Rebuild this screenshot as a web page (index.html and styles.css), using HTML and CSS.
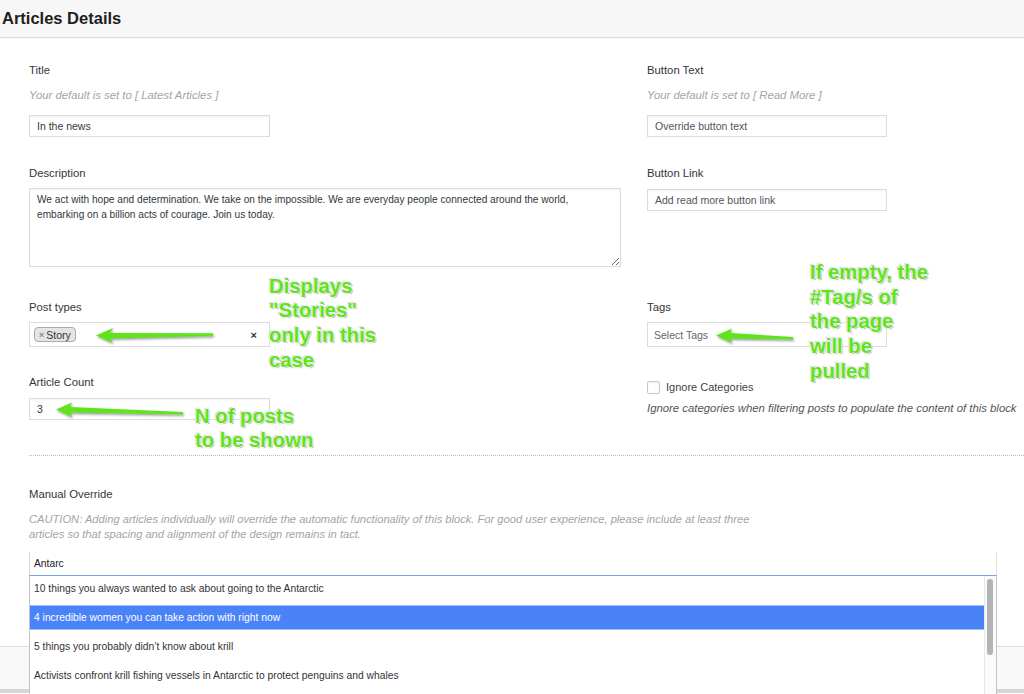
FILE: index.html
```html
<!DOCTYPE html>
<html>
<head>
<meta charset="utf-8">
<title>Articles Details</title>
<link rel="stylesheet" href="styles.css">
</head>
<body>
<div class="page">
  <header class="panel-head"><h1 class="panel-title">Articles Details</h1></header>
  <main class="panel-body">
    <div class="cols">
      <div class="col">
        <div class="field">
          <div class="lbl">Title</div>
          <p class="hint">Your default is set to [ Latest Articles ]</p>
          <div class="txt">In the news</div>
        </div>
        <div class="field f-desc">
          <div class="lbl">Description</div>
          <textarea class="area">We act with hope and determination. We take on the impossible. We are everyday people connected around the world, embarking on a billion acts of courage. Join us today.</textarea>
        </div>
        <div class="field f-post">
          <div class="lbl">Post types</div>
          <div class="sel">
            <span class="chip"><span class="chip-x">×</span>Story</span>
            <span class="sel-clear">×</span>
          </div>
        </div>
        <div class="field f-count">
          <div class="lbl">Article Count</div>
          <div class="txt txt-count">3</div>
        </div>
      </div>
      <div class="col">
        <div class="field">
          <div class="lbl">Button Text</div>
          <p class="hint">Your default is set to [ Read More ]</p>
          <div class="txt txt-ph">Override button text</div>
        </div>
        <div class="field f-link">
          <div class="lbl">Button Link</div>
          <div class="txt txt-ph txt-link">Add read more button link</div>
        </div>
        <div class="field f-tags">
          <div class="lbl">Tags</div>
          <div class="sel sel-tags"><span class="sel-ph">Select Tags</span></div>
        </div>
        <div class="check-row">
          <span class="checkbox"></span>
          <span class="check-lbl">Ignore Categories</span>
        </div>
        <p class="help">Ignore categories when filtering posts to populate the content of this block</p>
      </div>
    </div>
    <div class="sep"></div>
    <section class="manual">
      <div class="lbl">Manual Override</div>
      <p class="caution">CAUTION: Adding articles individually will override the automatic functionality of this block. For good user experience, please include at least three articles so that spacing and alignment of the design remains in tact.</p>
      <div class="search">
        <span class="search-text">Antarc</span>
        <div class="dropdown">
          <ul class="results">
            <li class="opt">10 things you always wanted to ask about going to the Antarctic</li>
            <li class="opt opt-active">4 incredible women you can take action with right now</li>
            <li class="opt">5 things you probably didn’t know about krill</li>
            <li class="opt">Activists confront krill fishing vessels in Antarctic to protect penguins and whales</li>
          </ul>
          <div class="scrollbar"><span class="thumb"></span></div>
        </div>
      </div>
    </section>
  </main>
  <footer class="panel-foot"></footer>
  <div class="bottom-bar"></div>

  <div class="note note-post">Displays<br>"Stories"<br>only in this<br>case</div>
  <div class="note note-count">N of posts<br>to be shown</div>
  <div class="note note-tags">If empty, the<br>#Tag/s of<br>the page<br>will be<br>pulled</div>

  <svg class="arrows" width="1024" height="694" viewBox="0 0 1024 694">
    <defs>
      <filter id="sh" x="-10%" y="-50%" width="120%" height="200%">
        <feDropShadow dx="1" dy="1.5" stdDeviation="1" flood-color="#444" flood-opacity="0.55"/>
      </filter>
    </defs>
    <g fill="#5fe41c" filter="url(#sh)">
      <polygon points="96,335.5 113,328 110,333 213,333.3 213,335.9 110,338.5 113,343"/>
      <polygon points="56,409.5 72,402.5 70,407 183,412 183,414.6 70,412.5 72,417"/>
      <polygon points="716,335.5 732,328.5 730,333 793,337 793,339.6 730,338.5 732,343"/>
    </g>
  </svg>
</div>
</body>
</html>
```

FILE: styles.css
```css
* { box-sizing: border-box; }
html, body { margin: 0; padding: 0; }
body {
  width: 1024px;
  height: 694px;
  overflow: hidden;
  background: #fff;
  font-family: "Liberation Sans", Arial, Helvetica, sans-serif;
  color: #32373c;
}
.page { position: relative; width: 1024px; height: 694px; overflow: hidden; }

.panel-head {
  height: 38px;
  background: #f7f7f7;
  border-bottom: 1px solid #dedede;
  box-shadow: 0 1px 1px rgba(0,0,0,0.04);
  display: flex;
  align-items: center;
  padding-left: 2px;
}
.panel-title {
  margin: 0;
  font-size: 16.5px;
  font-weight: bold;
  color: #1e1e1e;
  line-height: 20px;
  padding-bottom: 1px;
}

.panel-body { padding: 25px 0 0 29px; }
.cols { display: grid; grid-template-columns: 618px 1fr; }
.col { display: flex; flex-direction: column; align-items: flex-start; }

.lbl { font-size: 11.3px; line-height: 14px; color: #32373c; }
.hint {
  margin: 11px 0 0;
  font-size: 11.35px; line-height: 14px;
  font-style: italic; color: #a0a5aa;
}
.txt {
  margin-top: 13px;
  width: 241px; height: 22px;
  border: 1px solid #dcdcdc;
  box-shadow: inset 0 1px 2px rgba(0,0,0,0.05);
  padding: 0 7px;
  font-size: 10.5px; line-height: 20px;
  color: #32373c;
  background: #fff;
}
.txt-ph { width: 240px; color: #50555a; }
.txt-link { margin-top: 9px; }
.txt-count { margin-top: 9px; }

.f-desc, .f-link { margin-top: 29px; }
.area {
  display: block;
  margin: 8px 0 0;
  width: 592px; height: 79px;
  border: 1px solid #dcdcdc;
  box-shadow: inset 0 1px 2px rgba(0,0,0,0.05);
  padding: 3px 7px;
  font-family: "Liberation Sans", Arial, sans-serif;
  font-size: 10.15px; line-height: 15px;
  color: #32373c;
  background: #fff;
  resize: vertical;
  outline: none;
}

.f-post { margin-top: 33px; }
.f-count { margin-top: 28px; }
.f-tags { margin-top: 89px; }

.sel {
  margin-top: 8px;
  width: 241px; height: 25px;
  border: 1px solid #dcdcdc;
  background: #fff;
  display: flex; align-items: center;
  padding: 0 12px 0 4px;
}
.sel-tags { width: 240px; padding-left: 6px; }
.sel-ph { font-size: 10.5px; color: #666; }
.chip {
  height: 15px;
  display: inline-flex; align-items: center;
  padding: 0 4px 0 4px;
  border: 1px solid #aaa;
  border-radius: 4px;
  background: #e4e4e4;
  font-size: 10.5px; color: #333;
  box-shadow: inset 0 0 1px #fff;
}
.chip-x { font-size: 9px; color: #888; margin-right: 2px; font-weight: bold; }
.sel-clear { margin-left: auto; font-size: 11px; font-weight: bold; color: #333; }

.check-row { margin-top: 33px; display: flex; align-items: center; height: 14px; }
.checkbox {
  width: 13px; height: 13px;
  border: 1px solid #c8c8c8;
  border-radius: 2px;
  background: #fff;
  box-shadow: inset 0 1px 2px rgba(0,0,0,0.06);
}
.check-lbl { margin-left: 6px; font-size: 11px; color: #444; }
.help {
  margin: 7px 0 0;
  font-size: 11.35px; line-height: 14px;
  font-style: italic; color: #555;
  white-space: nowrap;
}

.sep { margin-top: 35px; border-top: 1px dotted #b8b8b8; height: 0; }

.manual { margin-top: 31px; padding-bottom: 71px; }
.caution {
  margin: 11px 0 0;
  max-width: 752px;
  font-size: 11.15px; line-height: 15px;
  font-style: italic; color: #a0a5aa;
}
.search {
  position: relative;
  margin-top: 10px;
  width: 968px; height: 23px;
  border-left: 1px solid #d6d6d6;
  border-right: 1px solid #e2e2e2;
  padding-left: 4px;
  display: flex; align-items: center;
}
.search-text { font-size: 10.3px; color: #222; }

.dropdown {
  position: absolute;
  top: 100%; left: -1px;
  width: 968px; height: 130px;
  background: #fff;
  border: 1px solid #c4c4c4;
  border-top-color: #6fa3ea;
  display: flex;
  z-index: 2;
}
.results { list-style: none; margin: 0; padding: 0; flex: 1; }
.opt {
  height: 25px; line-height: 25px;
  margin-bottom: 4px;
  padding-left: 4px;
  font-size: 10.3px; color: #333;
  white-space: nowrap;
}
.opt-active {
  background: #4a83f7;
  color: #fff;
  box-shadow: inset 0 1px 0 #9fbdf6, inset 0 -1px 0 #9fbdf6;
}
.scrollbar {
  width: 12px;
  background: #fafafa;
  border-left: 1px solid #e8e8e8;
  padding: 3px 0 0 2px;
}
.thumb {
  display: block;
  width: 6px; height: 76px;
  border-radius: 3px;
  background: #b4b4b4;
}

.panel-foot {
  height: 43px;
  background: #f8f8f8;
  border-top: 1px solid #e0e0e0;
}
.bottom-bar { height: 4px; background: #d6d6d6; }

.note {
  position: absolute;
  font-family: "Liberation Sans", Arial, sans-serif;
  font-weight: bold;
  font-size: 20.3px;
  line-height: 24.7px;
  color: #5fe41c;
  white-space: nowrap;
  text-shadow: 1px 0 0 #f2f2f2, -1px 0 0 #f2f2f2, 0 1px 0 #f2f2f2, 0 -1px 0 #f2f2f2,
    1px 1px 1px #8a8a8a, -1px -1px 1px #bdbdbd;
  z-index: 5;
}
.note-post { left: 269px; top: 273.6px; }
.note-count { left: 195px; top: 403.6px; }
.note-tags { left: 810px; top: 260px; }

.arrows { position: absolute; left: 0; top: 0; z-index: 6; pointer-events: none; }
```
